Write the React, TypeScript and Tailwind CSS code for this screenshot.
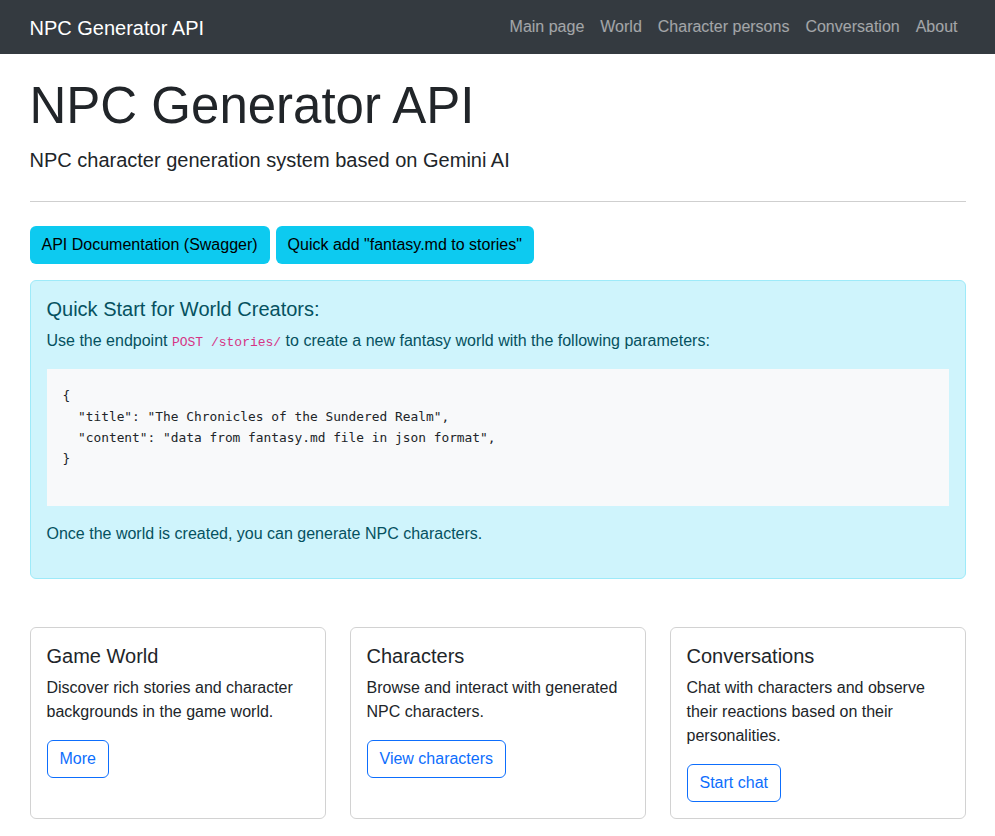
const NAV_LINKS = ["Main page", "World", "Character persons", "Conversation", "About"];

const CARDS = [
  {
    title: "Game World",
    text: "Discover rich stories and character backgrounds in the game world.",
    action: "More",
  },
  {
    title: "Characters",
    text: "Browse and interact with generated NPC characters.",
    action: "View characters",
  },
  {
    title: "Conversations",
    text: "Chat with characters and observe their reactions based on their personalities.",
    action: "Start chat",
  },
];

const SAMPLE = `{
  "title": "The Chronicles of the Sundered Realm",
  "content": "data from fantasy.md file in json format",
}

`;

export default function App() {
  return (
    <div className="min-h-screen bg-white text-[#212529] font-['Liberation_Sans',Arial,sans-serif] text-base leading-6">
      {/* Navbar */}
      <nav className="bg-[#343a40] h-[54px]">
        <div className="w-[960px] mx-auto px-3 h-full flex items-center justify-between">
          <a href="#" className="text-white text-xl leading-[30px] pt-[1px]">
            NPC Generator API
          </a>
          <ul className="flex">
            {NAV_LINKS.map((link) => (
              <li key={link}>
                <a href="#" className="block px-2 py-2 text-white/55">
                  {link}
                </a>
              </li>
            ))}
          </ul>
        </div>
      </nav>

      <main className="w-[960px] mx-auto px-3 pt-[22px]">
        {/* Header */}
        <h1 className="text-[51px] leading-[60.6px] font-light mb-2">NPC Generator API</h1>
        <p className="text-xl leading-[30px] font-light">
          NPC character generation system based on Gemini AI
        </p>
        <hr className="border-0 border-t border-[#cfcfcf] mt-[26px] mb-6" />

        {/* Actions */}
        <div className="flex gap-[6px] mb-4">
          <a href="#" className="bg-[#0dcaf0] text-black rounded-[6px] px-3 py-[6px] leading-[26px]">
            API Documentation (Swagger)
          </a>
          <a href="#" className="bg-[#0dcaf0] text-black rounded-[6px] px-3 py-[6px] leading-[26px]">
            Quick add "fantasy.md to stories"
          </a>
        </div>

        {/* Quick start */}
        <div className="bg-[#cff4fc] border border-[#9eeaf9] text-[#055160] rounded-[6px] p-4">
          <h5 className="text-xl leading-6 mb-2">Quick Start for World Creators:</h5>
          <p className="mb-4 h-6">
            Use the endpoint{" "}
            <code className="text-[#d63384] font-['Liberation_Mono',monospace] text-[13px] leading-none">
              POST /stories/
            </code>{" "}
            to create a new fantasy world with the following parameters:
          </p>
          <pre className="bg-[#f8f9fa] text-[#212529] p-4 mb-4 font-['DejaVu_Sans_Mono',monospace] text-[12.85px] leading-[21px] whitespace-pre">
            {SAMPLE}
          </pre>
          <p className="mb-4">Once the world is created, you can generate NPC characters.</p>
        </div>

        {/* Cards */}
        <div className="grid grid-cols-3 gap-6 mt-12 pb-6">
          {CARDS.map((card) => (
            <div key={card.title} className="border border-black/[0.175] rounded-[6px] p-4">
              <h5 className="text-xl leading-6 mb-2">{card.title}</h5>
              <p className="mb-4">{card.text}</p>
              <a
                href="#"
                className="inline-block border border-[#0d6efd] text-[#0d6efd] rounded-[6px] px-3 py-[6px] leading-6"
              >
                {card.action}
              </a>
            </div>
          ))}
        </div>
      </main>
    </div>
  );
}
